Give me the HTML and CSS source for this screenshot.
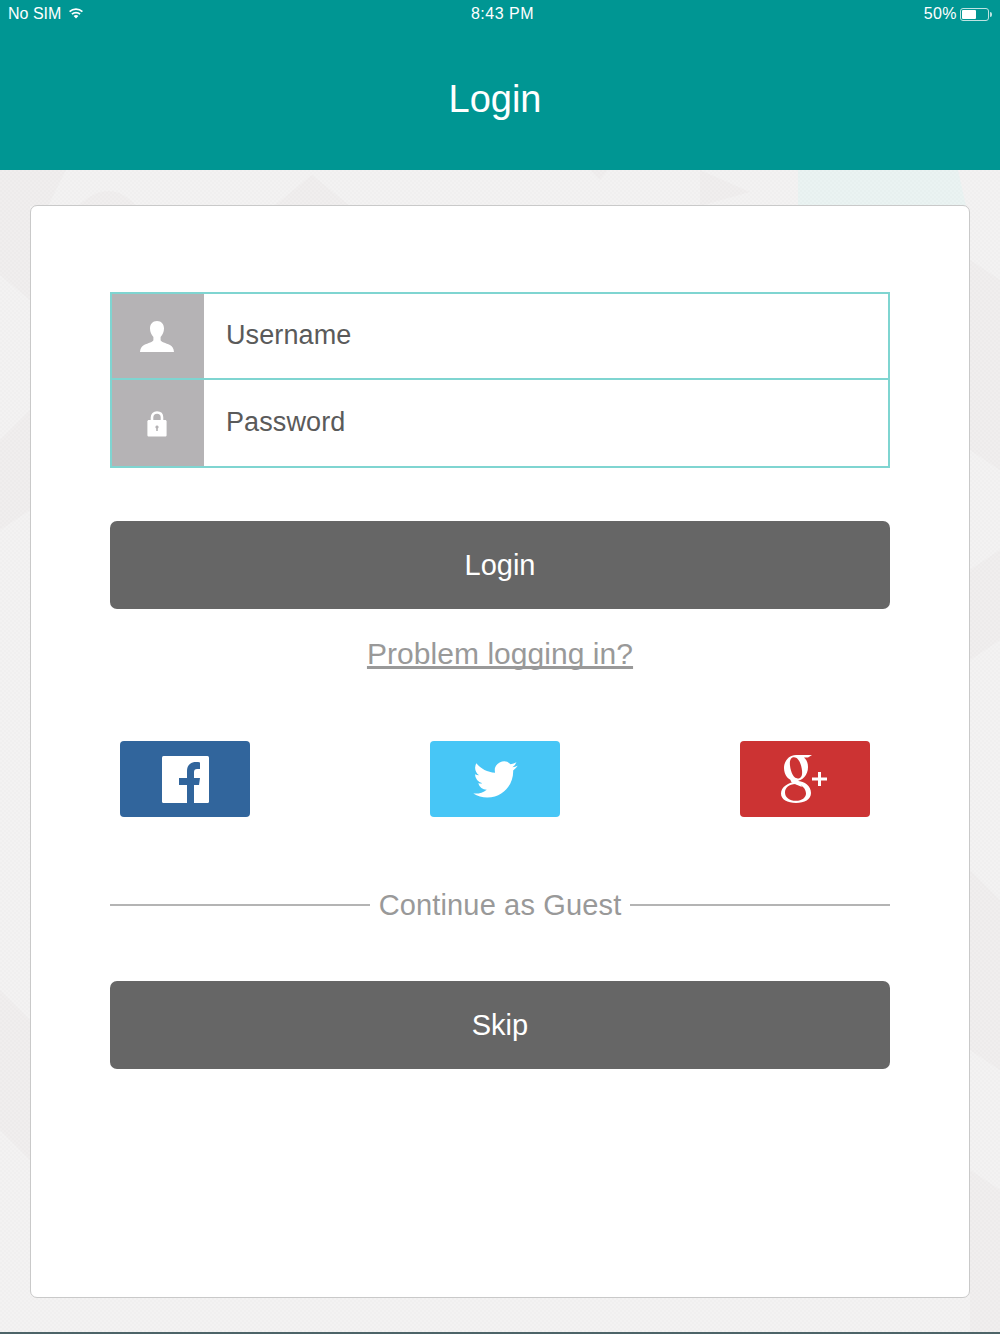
FILE: index.html
```html
<!DOCTYPE html>
<html lang="en">
	<head>
		<meta charset="UTF-8" />
		<meta name="viewport" content="width=device-width, initial-scale=1.0" />
		<title>Login</title>
		<link rel="stylesheet" href="styles.css">
	</head>
	<body>
		<svg class="backdrop" width="1000" height="1164" viewBox="0 0 1000 1164">
			<defs>
				<pattern id="weave" width="4" height="4" patternUnits="userSpaceOnUse">
					<rect x="0" y="0" width="2" height="2" fill="#000" opacity="0.012" />
					<rect x="2" y="2" width="2" height="2" fill="#000" opacity="0.012" />
				</pattern>
			</defs>
			<g fill="#f0eeee">
				<path d="M0 0H66L48 36H0Z" />
				<path d="M78 36Q110 6 136 36Z" />
				<path d="M274 36L312 5L350 36Z" />
				<path d="M590 0H608L600 10Z" />
				<path d="M700 0L750 22L700 36Z" />
				<path d="M0 36H30V130L0 105Z" />
				<path d="M0 270L30 240V340L0 360Z" />
				<path d="M0 820L30 850V990L0 960Z" />
				<path d="M970 90L1000 110V300L970 280Z" />
				<path d="M970 400L1000 380V470L970 490Z" />
				<path d="M970 700L1000 730V900L970 880Z" />
				<path d="M970 1000L1000 1020V1164H970Z" />
			</g>
			<path d="M798 0H958L966 36H798Z" fill="#eaf3f2" />
			<rect width="1000" height="1164" fill="url(#weave)" />
		</svg>

		<header class="topbar">
			<div class="status">
				<div class="status-left">
					<span>No SIM</span>
					<svg class="wifi" width="16" height="12" viewBox="0 0 16 12">
						<path d="M8 11.5L5.6 8.9C7 7.7 9 7.7 10.4 8.9Z" fill="#fff" />
						<path d="M3.9 7.2C6.2 5 9.8 5 12.1 7.2M1.6 4.7C5.2 1.3 10.8 1.3 14.4 4.7" fill="none" stroke="#fff" stroke-width="1.7" />
					</svg>
				</div>
				<div class="status-time">8:43 PM</div>
				<div class="status-right">
					<span>50%</span>
					<div class="battery"><div class="battery-level"></div></div>
					<div class="battery-tip"></div>
				</div>
			</div>
			<h1 class="title">Login</h1>
		</header>

		<main class="card">
			<div class="fields">
				<div class="field">
					<div class="field-icon">
						<svg width="36" height="32" viewBox="0 0 36 32">
							<path d="M18 1C22.5 1 25 4.4 25 8.5C25 12 23.5 15 21.6 17V20C21.6 22 27 23 31 25C33.6 26.3 34.6 28.5 35 32H1C1.4 28.5 2.4 26.3 5 25C9 23 14.4 22 14.4 20V17C12.5 15 11 12 11 8.5C11 4.4 13.5 1 18 1Z" fill="#fff" />
						</svg>
					</div>
					<div class="field-text">Username</div>
				</div>
				<div class="field field-last">
					<div class="field-icon">
						<svg width="20" height="26" viewBox="0 0 20 26">
							<path d="M5 10V6.5C5 3.4 7 1.5 10 1.5C13 1.5 15 3.4 15 6.5V10" fill="none" stroke="#fff" stroke-width="2.6" />
							<path d="M2 9H18C19 9 19.6 9.6 19.6 10.6V24C19.6 25 19 25.6 18 25.6H2C1 25.6 .4 25 .4 24V10.6C.4 9.6 1 9 2 9Z" fill="#fff" />
							<path d="M10 14.5A1.6 1.6 0 0 1 10.8 17.5V20H9.2V17.5A1.6 1.6 0 0 1 10 14.5Z" fill="#b5b3b5" />
						</svg>
					</div>
					<div class="field-text">Password</div>
				</div>
			</div>

			<a class="btn btn-login" href="javascript:;">Login</a>
			<a class="problem" href="javascript:;">Problem logging in?</a>

			<div class="social">
				<a class="social-btn fb" href="javascript:;">
					<svg width="47" height="47" viewBox="0 0 47 47">
						<rect width="47" height="47" rx="1.5" fill="#fff" />
						<path d="M25 47V29H17V22H25V15C25 9 29 6 34 6C35.5 6 37 6.2 38 6.4V13H35C33 13 32 14 32 16V22H38L37 29H32V47Z" fill="#31659c" />
					</svg>
				</a>
				<a class="social-btn tw" href="javascript:;">
					<svg width="45" height="37" viewBox="0 0 24 20">
						<path d="M23.953 2.57a10 10 0 0 1-2.825.775 4.958 4.958 0 0 0 2.163-2.723c-.951.555-2.005.959-3.127 1.184a4.92 4.92 0 0 0-8.384 4.482C7.69 6.095 4.067 4.13 1.64 1.162a4.822 4.822 0 0 0-.666 2.475c0 1.71.87 3.213 2.188 4.096a4.904 4.904 0 0 1-2.228-.616v.06a4.923 4.923 0 0 0 3.946 4.827 4.996 4.996 0 0 1-2.212.085 4.936 4.936 0 0 0 4.604 3.417 9.867 9.867 0 0 1-6.102 2.105c-.39 0-.779-.023-1.17-.067a13.995 13.995 0 0 0 7.557 2.209c9.053 0 13.998-7.496 13.998-13.985 0-.21 0-.42-.015-.63A9.935 9.935 0 0 0 24 2.59z" fill="#fff" />
					</svg>
				</a>
				<a class="social-btn gp" href="javascript:;">
					<svg width="48" height="50" viewBox="0 0 48 50">
						<path fill-rule="evenodd" fill="#fff" d="M15 1H31L27 3.4H23C26 6 27 9.500 27 13C27 21 21.500 27 14.500 27C7.500 27 3 21 3 14C3 7 8 1 15 1ZM13 3.300C9.500 3.300 8.500 7 9 11.500C9.700 18 12.500 24.600 17 24.600C20.500 24.600 21.500 21 21 16.500C20.300 10 17.500 3.300 13 3.300Z" />
						<path fill-rule="evenodd" fill="#fff" d="M16 27C24 27 30 32 30 39C30 45.500 23.500 49 15 49C6.500 49 0 45.500 0 39.500C0 33 7 28.500 16 27ZM14.500 30C8 30 4 34 4 38.500C4 43.500 8.500 46.800 15 46.800C21 46.800 25 43.500 25 39.500C25 34.500 20.500 30 14.500 30Z" />
						<path d="M11 24C8 27 10 28 15 30.500L21 33L17 26L15 24Z" fill="#fff" />
						<path d="M31 25H46M38.500 18V32" fill="none" stroke="#fff" stroke-width="3" />
					</svg>
				</a>
			</div>

			<div class="guest">
				<span class="guest-line"></span>
				<span class="guest-text">Continue as Guest</span>
				<span class="guest-line"></span>
			</div>

			<a class="btn btn-skip" href="javascript:;">Skip</a>
		</main>
		<div class="bottom-edge"></div>
	</body>
</html>
```

FILE: styles.css
```css
* {
	margin: 0;
	padding: 0;
	box-sizing: border-box;
}

html,
body {
	width: 1000px;
	height: 1334px;
	overflow: hidden;
}

body {
	position: relative;
	background-color: #f3f2f2;
	font-family: "Liberation Sans", Arial, sans-serif;
}

a {
	text-decoration: none;
	color: inherit;
}

.backdrop {
	position: absolute;
	left: 0;
	top: 170px;
}

.topbar {
	position: relative;
	height: 170px;
	background-color: #009693;
	color: #fff;
}

.status {
	display: grid;
	grid-template-columns: 1fr auto 1fr;
	align-items: center;
	height: 28px;
	padding: 0 8px;
	font-size: 16px;
}

.status-left {
	display: flex;
	align-items: center;
	gap: 7px;
}

.wifi {
	margin-top: -3px;
}

.status-time {
	margin-left: 5px;
	letter-spacing: 0.5px;
}

.status-right {
	display: flex;
	align-items: center;
	justify-content: flex-end;
	letter-spacing: 0.4px;
}

.battery {
	width: 29px;
	height: 13px;
	margin-left: 3px;
	padding: 1px;
	border: 1px solid #bfe3e2;
	border-radius: 3px;
}

.battery-level {
	width: 14px;
	height: 9px;
	background-color: #fff;
	border-radius: 1px;
}

.battery-tip {
	width: 2px;
	height: 5px;
	margin-left: 1px;
	background-color: #bfe3e2;
	border-radius: 0 2px 2px 0;
}

.title {
	padding: 48px 10px 0 0;
	font-size: 38px;
	font-weight: normal;
	line-height: 46px;
	text-align: center;
}

.card {
	position: relative;
	width: 940px;
	height: 1093px;
	margin: 35px 0 0 30px;
	padding: 86px 79px 0;
	background-color: #fff;
	border: 1px solid #c9c9c9;
	border-radius: 7px;
}

.fields {
	height: 176px;
	border: 2px solid #7fd5d1;
}

.field {
	display: flex;
	height: 86px;
	border-bottom: 2px solid #7fd5d1;
}

.field-last {
	height: 86px;
	border-bottom: 0;
}

.field-icon {
	display: flex;
	align-items: center;
	justify-content: center;
	width: 92px;
	padding-right: 3px;
	background-color: #b5b3b5;
}

.field-last .field-icon {
	padding-top: 2px;
}

.field-text {
	padding-left: 22px;
	font-size: 27px;
	letter-spacing: 0.1px;
	line-height: 82px;
	color: #5a5a5a;
}

.field-last .field-text {
	line-height: 84px;
}

.btn {
	display: block;
	height: 88px;
	background-color: #666;
	border-radius: 7px;
	color: #fff;
	font-size: 29px;
	line-height: 88px;
	text-align: center;
}

.btn-login {
	margin-top: 53px;
}

.problem {
	display: block;
	margin-top: 27px;
	font-size: 30px;
	letter-spacing: 0.05px;
	line-height: 36px;
	text-align: center;
	text-decoration: underline;
	text-decoration-skip-ink: none;
	color: #999;
}

.social {
	display: flex;
	justify-content: space-between;
	margin-top: 69px;
	padding: 0 20px 0 10px;
}

.social-btn {
	display: flex;
	align-items: center;
	justify-content: center;
	width: 130px;
	height: 76px;
	border-radius: 4px;
}

.fb {
	background-color: #31659c;
}

.tw {
	background-color: #47c6f6;
}

.gp {
	background-color: #cc3333;
}

.guest {
	display: flex;
	align-items: center;
	gap: 9px;
	margin-top: 71px;
	height: 34px;
}

.guest-line {
	flex: 1;
	height: 2px;
	background-color: #b4b4b4;
}

.guest-text {
	font-size: 29px;
	letter-spacing: 0.15px;
	line-height: 34px;
	color: #999;
}

.btn-skip {
	margin-top: 59px;
}

.bottom-edge {
	position: absolute;
	left: 0;
	bottom: 0;
	width: 1000px;
	height: 2px;
	background-color: #4d6468;
}
```
